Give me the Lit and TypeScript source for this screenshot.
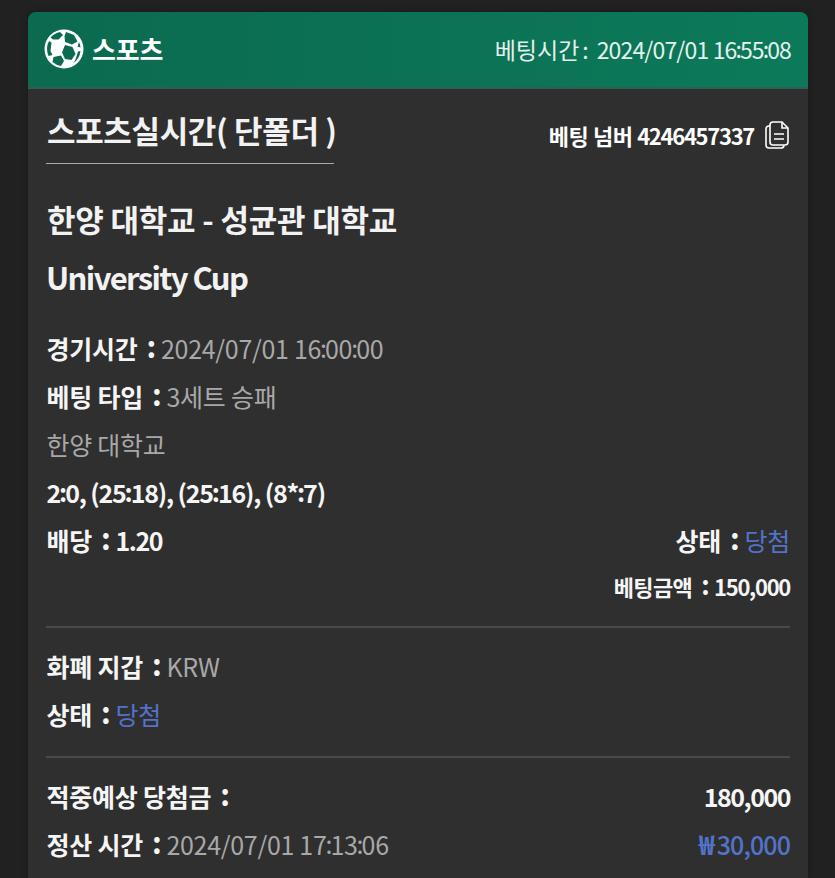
import { LitElement, html, css } from "lit";
import { customElement } from "lit/decorators.js";

const nums = (text: string) =>
  text.split(":").map((part, i) => (i === 0 ? part : html`<span class="nc">:</span>${part}`));

@customElement("app-root")
export class AppRoot extends LitElement {
  static styles = css`
    :host {
      display: block;
      height: 878px;
      overflow: hidden;
      background: #212121;
      font-family: "Noto Sans CJK KR", "Noto Sans", sans-serif;
      color: #fff;
    }
    .card {
      margin: 12px 27px 0 28px;
      background: #2f2f2f;
      border-radius: 8px 8px 0 0;
      box-shadow: 0 0 6px rgba(0, 0, 0, 0.25);
      height: 866px;
    }
    .head {
      height: 77px;
      box-sizing: border-box;
      display: flex;
      align-items: center;
      justify-content: space-between;
      padding: 0 17px 2px 16px;
      background: linear-gradient(90deg, #0b6a50, #0c7a5a);
      border-bottom: 2px solid #2e5f54;
      border-radius: 8px 8px 0 0;
    }
    .brand { display: flex; align-items: center; gap: 8px; }
    .brand span { font-size: 26px; font-weight: 700; line-height: 30px; letter-spacing: -0.2px; }
    .time { font-size: 23px; color: #e4f1ec; display: flex; align-items: baseline; }
    .time .lat { letter-spacing: -0.85px; font-size: 23px; }
    .body { padding: 0 18px; }
    .top { display: flex; justify-content: space-between; align-items: flex-start; }
    .title {
      margin-top: 18px;
      padding: 0 0 10px 1px;
      width: 288px;
      box-sizing: border-box;
      border-bottom: 1px solid #a9a9a9;
      font-size: 31px;
      font-weight: 700;
      line-height: 46px;
      letter-spacing: -0.35px;
      color: #f2f2f2;
      white-space: nowrap;
    }
    .num {
      margin-top: 30px;
      display: flex;
      align-items: center;
      gap: 10px;
      font-size: 22px;
      font-weight: 700;
      letter-spacing: -0.4px;
    }
    .num .lat { letter-spacing: -1.3px; }
    .match { margin-top: 26px; padding-left: 1px; font-size: 31px; font-weight: 700; line-height: 58px; color: #f2f2f2; letter-spacing: -0.2px; }
    .match .lat { letter-spacing: -1.6px; margin-left: -1px; }
    .rows { margin-top: 18px; padding-bottom: 18px; }
    .row { display: flex; justify-content: space-between; height: 48px; align-items: center; line-height: 36px; font-size: 25px; letter-spacing: -0.25px; }
    .row.sm { height: 44px; font-size: 22px; letter-spacing: -0.6px; }
    b { font-weight: 700; color: #f5f5f5; }
    b.lat { letter-spacing: -1.5px; }
    b.score { letter-spacing: -1.2px; }
    .sm b.lat { letter-spacing: -1.3px; }
    .v { color: #a8a8a8; }
    .v.lat { letter-spacing: -0.3px; }
    .blue { color: #5273c9; }
    .amt { font-weight: 500; letter-spacing: -0.9px; }
    .won { margin-right: 3px; font-weight: 700; font-size: 27px; line-height: 0; }
    .col { display: inline-block; font-weight: 700; font-size: 30px; line-height: 0; margin: 0 5px 0 9px; vertical-align: 1px; color: #f5f5f5; }
    .sm .col { font-size: 26px; margin: 0 5px 0 9px; }
    .col.t { font-size: 23px; font-weight: 400; margin: 0 8px 0 3px; vertical-align: baseline; color: #e4f1ec; }
    .nc { letter-spacing: -2px; vertical-align: 1px; margin-left: -1px; line-height: 0; }
    hr { border: 0; height: 2px; background: #4a4a4a; margin: 0; }
    .s2 { padding: 14px 0 18px; }
    .s3 { padding: 14px 0 0; }
    .in { padding-left: 0.5px; }
  `;

  render() {
    const colon = html`<span class="col">:</span>`;
    return html`
      <div class="card">
        <div class="head">
          <div class="brand">
            <svg width="40" height="40" viewBox="0 0 40 40">
              <circle cx="20" cy="20" r="19.500" fill="#fff" />
              <g fill="#0b6a50">
                <path d="M6.500 8.500A17.500 17.500 0 0 1 16 3l3 3-4.500 4.500H9z" />
                <path d="M22 3l8 3 3.500 6.500-5.500 3-7-2.500-.5-6z" />
                <path d="M21 16l7.500 2 3 7-4 6-6.500-1-3-6.500z" />
                <path d="M9.500 28l7.500-1.500 3 5.500-3 5a17.500 17.500 0 0 1-8.500-4z" />
                <path d="M5 12l2.500 1.500-1 8.500 2 4-4 1a17.500 17.500 0 0 1 .5-15z" />
                <path d="M34 22.500l2.500-.5A17.500 17.500 0 0 1 29.500 34l2-3.500z" />
                <path d="M35 13a17.500 17.500 0 0 1 1.500 5.500l-3-1z" />
              </g>
            </svg>
            <span>스포츠</span>
          </div>
          <div class="time">베팅시간<span class="col t">:</span><span class="lat">${nums("2024/07/01 16:55:08")}</span></div>
        </div>
        <div class="body">
          <div class="top">
            <div class="title">스포츠실시간( 단폴더 )</div>
            <div class="num">
              <span>베팅 넘버 <span class="lat">4246457337</span></span>
              <svg width="26" height="30" viewBox="0 0 26 30" fill="none" stroke="#fff" stroke-width="1.600">
                <path d="M9 2h9l6 6v14a3 3 0 0 1-3 3H9a3 3 0 0 1-3-3V5a3 3 0 0 1 3-3z" />
                <path d="M18 2v6h6" />
                <path d="M6 6H5a3 3 0 0 0-3 3v16a3 3 0 0 0 3 3h12a3 3 0 0 0 3-2.500" />
                <path d="M10 14h10M10 19h10" />
              </svg>
            </div>
          </div>
          <div class="match">한양 대학교 - 성균관 대학교<br /><span class="lat">University Cup</span></div>
          <div class="rows">
            <div class="row in"><span><b>경기시간</b>${colon}<span class="v lat">${nums("2024/07/01 16:00:00")}</span></span></div>
            <div class="row in"><span><b>베팅 타입</b>${colon}<span class="v">3세트 승패</span></span></div>
            <div class="row in"><span class="v">한양 대학교</span></div>
            <div class="row in"><b class="lat score">${nums("2:0, (25:18), (25:16), (8*:7)")}</b></div>
            <div class="row in"><span><b>배당</b>${colon}<b class="lat">1.20</b></span><span><b>상태</b>${colon}<span class="blue">당첨</span></span></div>
            <div class="row sm"><span></span><span><b>베팅금액</b>${colon}<b class="lat">150,000</b></span></div>
          </div>
          <hr />
          <div class="s2">
            <div class="row in"><span><b>화폐 지갑</b>${colon}<span class="v lat">KRW</span></span></div>
            <div class="row in"><span><b>상태</b>${colon}<span class="blue">당첨</span></span></div>
          </div>
          <hr />
          <div class="s3">
            <div class="row in"><span><b>적중예상 당첨금</b>${colon}</span><b class="lat">180,000</b></div>
            <div class="row in"><span><b>정산 시간</b>${colon}<span class="v lat">${nums("2024/07/01 17:13:06")}</span></span><span class="blue amt"><span class="won">₩</span>30,000</span></div>
          </div>
        </div>
      </div>
    `;
  }
}
